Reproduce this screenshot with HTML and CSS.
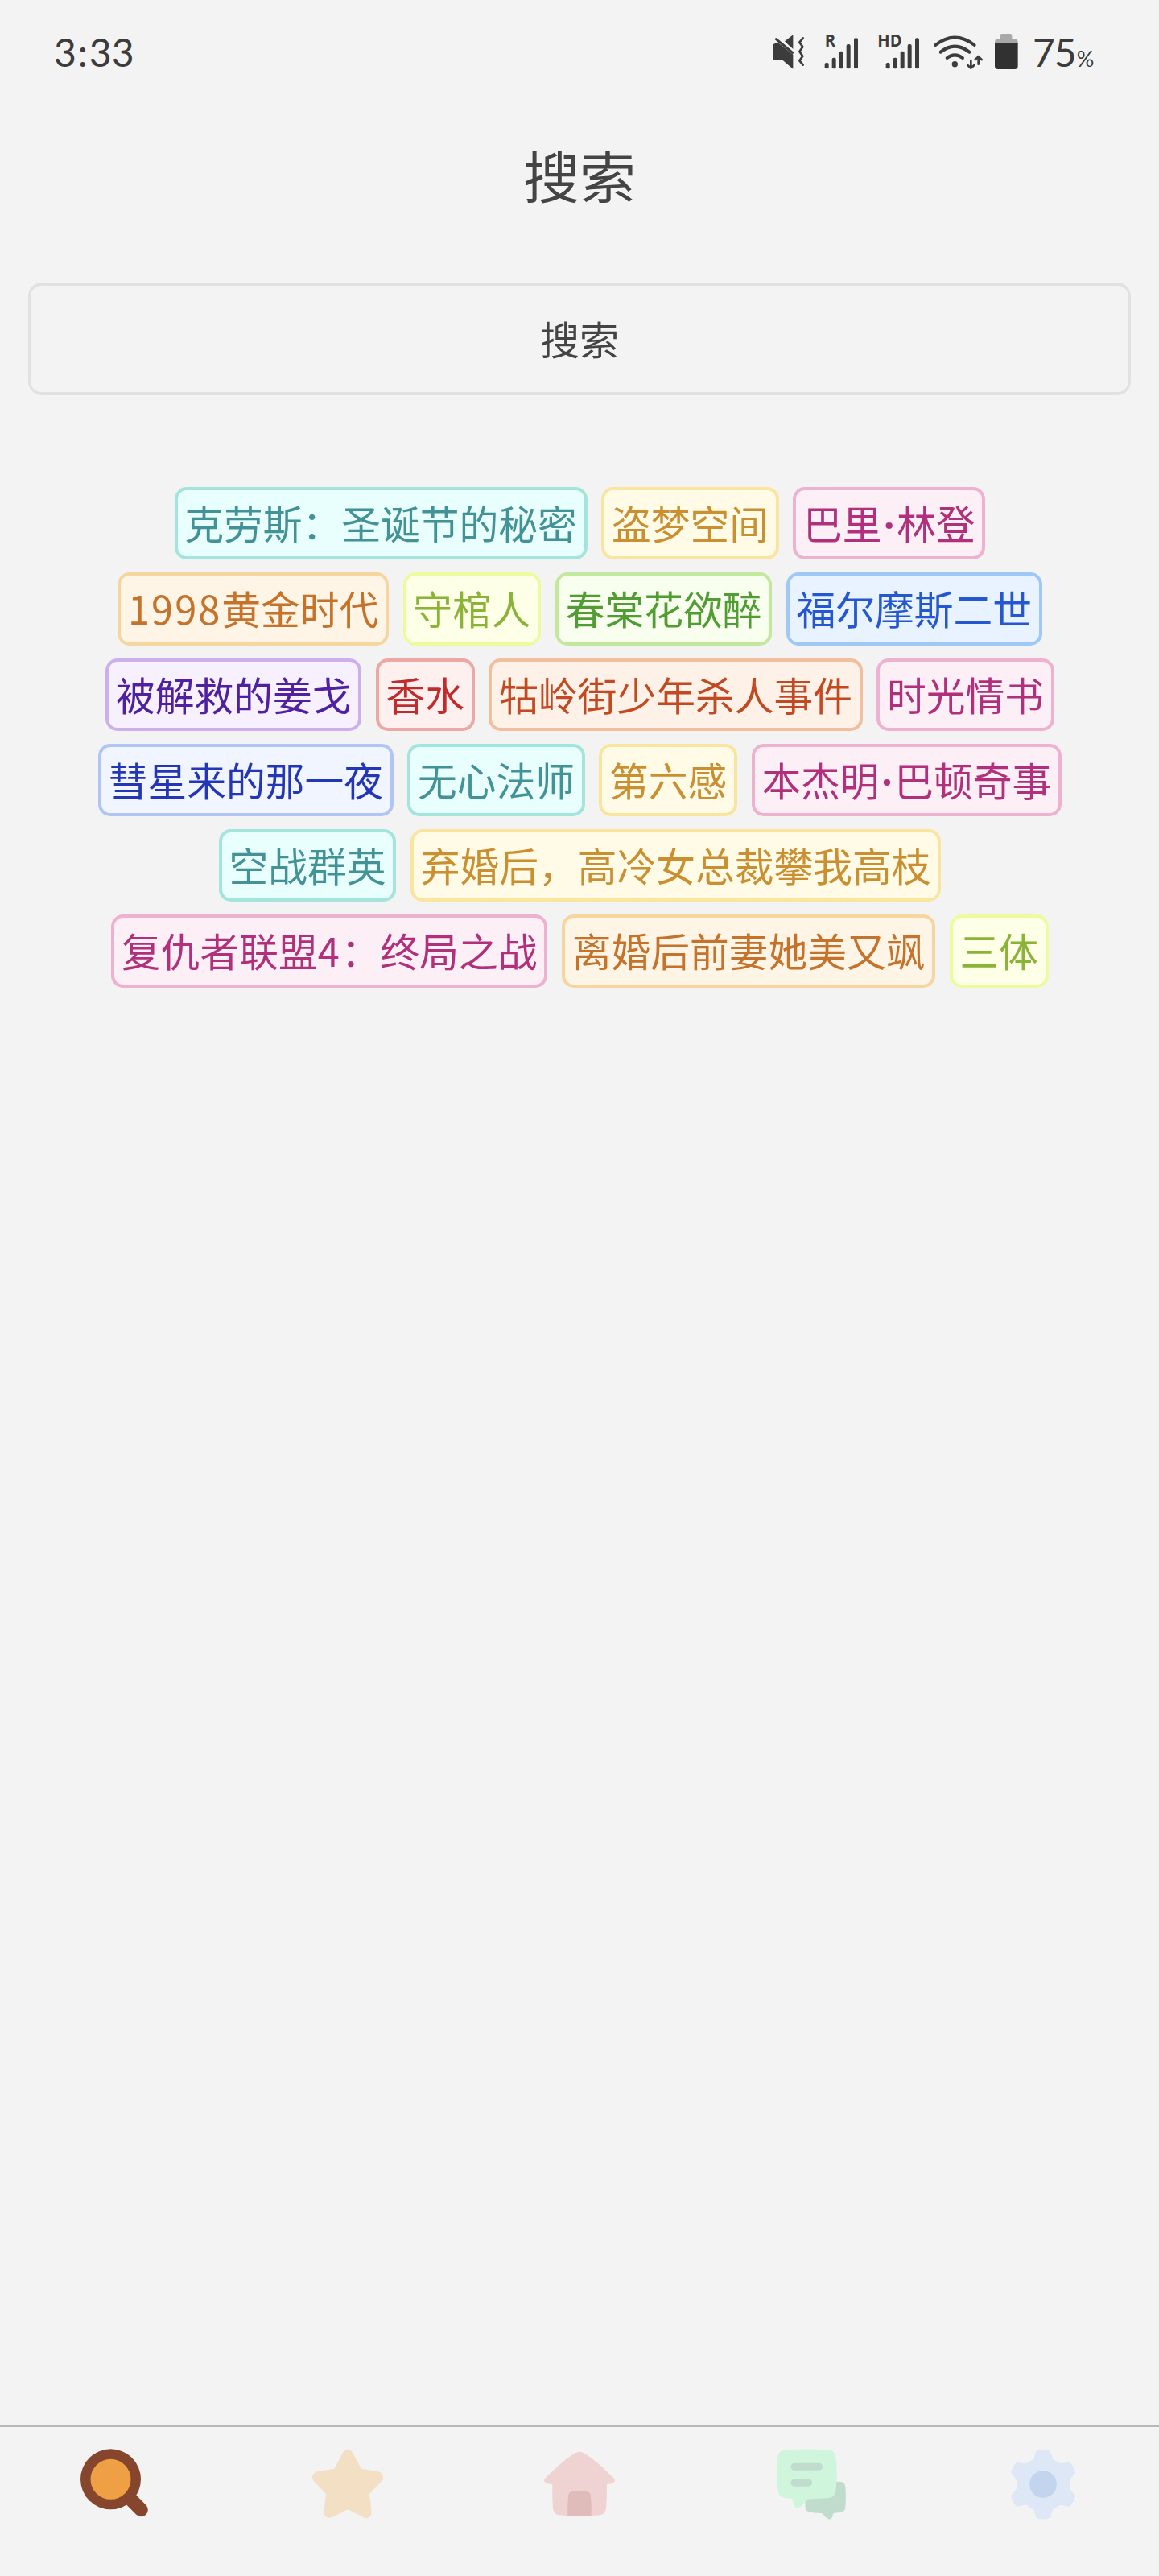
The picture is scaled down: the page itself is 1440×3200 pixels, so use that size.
FILE: index.html
```html
<!DOCTYPE html>
<html lang="zh-CN">
<head>
<meta charset="utf-8">
<title>搜索</title>
<link rel="stylesheet" href="styles.css">
</head>
<body>
<div class="app">
  <header class="status">
    <div class="clock">3<span class="colon">:</span>33</div>
    <div class="indicators">
      <svg width="62" height="48" viewBox="60 60 186 144" fill="#3c3c3c">
        <path d="M62 110Q62 102 70 102H84L136 143V197L98 165H70Q62 165 62 157ZM105 94L136 70V127Z"/>
        <path d="M73 86L134 136" stroke="#3c3c3c" stroke-width="9" stroke-linecap="round"/>
        <path d="M84 82L140 130" stroke="#f3f3f3" stroke-width="6"/>
        <path d="M173 82L160 98L172 115L160 132L172 149L160 166L173 182" fill="none" stroke="#3c3c3c" stroke-width="8" stroke-linecap="round" stroke-linejoin="round"/>
      </svg>
      <svg width="66" height="48" viewBox="246 60 198 144" fill="#3c3c3c">
        <text class="net" x="254" y="115" textLength="40" lengthAdjust="spacingAndGlyphs">R</text>
        <g><rect x="254" y="174" width="15" height="22" rx="6"/><rect x="281" y="155" width="15" height="41" rx="6"/><rect x="308" y="131" width="15" height="65" rx="6"/><rect x="335" y="105" width="15" height="91" rx="6"/><rect x="363" y="82" width="15" height="114" rx="6"/></g>
      </svg>
      <svg width="70" height="48" viewBox="444 60 210 144" fill="#3c3c3c">
        <text class="net" x="451" y="114" textLength="91" lengthAdjust="spacingAndGlyphs">HD</text>
        <g><rect x="482" y="174" width="15" height="22" rx="6"/><rect x="509" y="155" width="15" height="41" rx="6"/><rect x="536" y="131" width="15" height="65" rx="6"/><rect x="563" y="105" width="15" height="91" rx="6"/><rect x="591" y="82" width="15" height="114" rx="6"/></g>
      </svg>
      <svg width="75" height="48" viewBox="654 60 225 144" fill="none" stroke="#3c3c3c" stroke-linecap="round">
        <path d="M667 108Q739 52 812 108M686 134Q739 92 793 134M710 156Q739 134 768 156" stroke-width="12"/>
        <circle cx="739" cy="179" r="11" fill="#3c3c3c" stroke="none"/>
        <path d="M799 166V192M787 183L799 194L811 183M827 179V153M815 162L827 151L839 162" stroke-width="8"/>
      </svg>
      <svg width="50" height="48" viewBox="879 60 150 144">
        <path d="M888 104V96Q888 86 898 86H908V72Q908 66 914 66H946Q952 66 952 72V86H964Q974 86 974 96V104Z" fill="#a9a9a9"/>
        <path d="M888 99H974V186Q974 198 962 198H900Q888 198 888 186Z" fill="#313131"/>
      </svg>
      <div class="battery-text">75<span class="percent">%</span></div>
    </div>
  </header>

  <h1 class="title">搜索</h1>
  <div class="search-box">搜索</div>

  <main class="tags">
    <span class="tag teal">克劳斯：圣诞节的秘密</span>
    <span class="tag gold">盗梦空间</span>
    <span class="tag magenta">巴里<span class="dot">·</span>林登</span>
    <span class="tag orange"><span class="digits">1998</span>黄金时代</span>
    <span class="tag lime">守棺人</span>
    <span class="tag green">春棠花欲醉</span>
    <span class="tag blue">福尔摩斯二世</span>
    <span class="tag purple">被解救的姜戈</span>
    <span class="tag red">香水</span>
    <span class="tag volcano">牯岭街少年杀人事件</span>
    <span class="tag magenta">时光情书</span>
    <span class="tag indigo">彗星来的那一夜</span>
    <span class="tag teal">无心法师</span>
    <span class="tag gold">第六感</span>
    <span class="tag magenta">本杰明<span class="dot">·</span>巴顿奇事</span>
    <span class="tag teal">空战群英</span>
    <span class="tag gold">弃婚后，高冷女总裁攀我高枝</span>
    <span class="tag magenta">复仇者联盟<span class="digits">4</span>：终局之战</span>
    <span class="tag orange">离婚后前妻她美又飒</span>
    <span class="tag lime">三体</span>
  </main>

  <nav class="tabbar">
    <a class="tab">
      <svg class="tab-icon" viewBox="300 127 264 264">
        <path d="M480 308L526 354" stroke="#85462d" stroke-width="51" stroke-linecap="round"/>
        <circle cx="412.500" cy="240.500" r="112.500" fill="#85462d"/>
        <circle cx="412.500" cy="240.500" r="75" fill="#f0a044"/>
      </svg>
    </a>
    <a class="tab">
      <svg class="tab-icon" viewBox="1164 127 264 264">
        <path d="M1277 143Q1284 131 1296 131T1315 143L1346 201L1409 212Q1422 214 1427 226T1423 247L1377 295L1385 362Q1386 375 1376 382T1356 383L1296 353L1236 383Q1226 387 1216 381T1207 362L1215 295L1169 247Q1161 238 1165 227T1183 212L1246 201Z" fill="#f2dfc4"/>
      </svg>
    </a>
    <a class="tab">
      <svg class="tab-icon" viewBox="228 127 264 264">
        <path d="M344 143Q360 134 376 143C412 163 452 201 488 237Q494 243 490 250T480 257L462 260Q462 311 459 350Q457 371 435 374Q360 381 285 374Q264 371 261 350Q258 311 259 260L240 257Q232 255 229 248T232 237C268 201 308 163 344 143Z" fill="#efd3d3"/>
        <path d="M316 377Q315 333 318 303Q320 286 337 284Q360 281 383 284Q400 286 402 303Q405 333 404 377Q360 379 316 377Z" fill="#dfbbba"/>
      </svg>
    </a>
    <a class="tab">
      <svg class="tab-icon" viewBox="1092 127 264 264">
        <path d="M1300 249H1330Q1349 250 1351 269Q1354 306 1351 345Q1349 362 1332 364L1308 366Q1303 370 1303 380Q1299 391 1289 389C1279 385 1272 375 1263 367Q1240 366 1219 363Q1204 361 1202 346Q1200 333 1201 300Z" fill="#bfdccd"/>
        <path d="M1128 131Q1208 126 1287 131Q1312 133 1315 157Q1324 220 1315 285Q1312 307 1289 310Q1255 313 1219 314C1207 315 1198 332 1187 341Q1172 353 1161 342Q1156 338 1156 321Q1155 313 1150 312L1127 310Q1104 307 1100 285Q1091 220 1099 157Q1102 133 1128 131Z" fill="#d0f5dd"/>
        <path d="M1161 194H1253M1161 253.500H1214" stroke="#bfdccd" stroke-width="27" stroke-linecap="round"/>
      </svg>
    </a>
    <a class="tab">
      <svg class="tab-icon" viewBox="216 127 264 264">
        <path d="M323 134Q347 124 373 134L378 145L385 167Q399 172 411 182L446 177Q463 190 468 217L447 243V276L468 301Q464 328 446 342L411 336Q399 346 385 351L374 384Q348 395 323 384L312 351Q299 347 286 336L250 342Q233 329 228 301L249 276V243L228 217Q233 190 250 177L286 182Q298 173 312 167Z" fill="#dde7f5"/>
        <circle cx="348" cy="259" r="50.500" fill="#c3d4ee"/>
      </svg>
    </a>
  </nav>
</div>
</body>
</html>
```
FILE: styles.css
```css
* { box-sizing: border-box; }

body {
  margin: 0;
  background: #f3f3f3;
  color: #444;
  font-family: "Noto Sans CJK SC", sans-serif;
}

.app {
  display: flex;
  flex-direction: column;
  width: 1440px;
  height: 3200px;
}

.status {
  display: flex;
  justify-content: space-between;
  height: 128px;
  padding: 40px 0 0 67px;
  color: #3c3c3c;
  font-family: Lato, sans-serif;
}

.clock,
.battery-text {
  height: 48px;
  font-size: 48px;
  line-height: 49px;
  white-space: nowrap;
}

.colon {
  display: inline-block;
  width: 16px;
  text-align: center;
}

.indicators { display: flex; width: 480px; }
.indicators svg { flex: none; overflow: visible; }

.net { font: 700 62px "Open Sans", sans-serif; }

.battery-text { letter-spacing: -1px; }
.percent { font-size: 27px; margin-left: 1px; }

.title {
  margin: 0;
  height: 180px;
  font-size: 70px;
  font-weight: 400;
  line-height: 177px;
  text-align: center;
}

.search-box {
  height: 140px;
  margin: 43px 35px 0;
  border: 4px solid #e1e1e1;
  border-left-width: 3px;
  border-right-width: 3px;
  border-radius: 17px;
  font-size: 49px;
  line-height: 130px;
  text-align: center;
}

.tags {
  display: flex;
  flex: 1;
  flex-wrap: wrap;
  align-content: flex-start;
  justify-content: center;
  gap: 16px 17.700px;
  padding: 114px 50px 0 51px;
}

.tag {
  height: 90.300px;
  padding: 0 8.700px;
  border: 4px solid;
  border-radius: 15px;
  font-size: 48.750px;
  line-height: 79px;
  white-space: nowrap;
}

.dot {
  margin: 0 2.400px;
  font-family: "Open Sans", sans-serif;
  font-weight: 700;
  line-height: 1;
}

.digits { letter-spacing: 2px; }

.teal { color: #439296; background: #e9fffd; border-color: #a3e4dc; }
.gold { color: #c98f31; background: #fffbe6; border-color: #fae5a0; }
.magenta { color: #b0307c; background: #fceff6; border-color: #eeb1d0; }
.orange { color: #c5722b; background: #fff5e6; border-color: #f6d69f; }
.lime { color: #8bb338; background: #fdffe6; border-color: #edfb9f; }
.green { color: #529c34; background: #f8ffee; border-color: #c2e89d; }
.blue { color: #2557d0; background: #e8f3ff; border-color: #9fc8f6; }
.purple { color: #4f20a0; background: #f6f0ff; border-color: #cbb0ec; }
.red { color: #c02c2c; background: #fdf0ef; border-color: #eca8a4; }
.volcano { color: #c24a22; background: #fdf1e8; border-color: #f1be9e; }
.indigo { color: #2336b5; background: #f0f5ff; border-color: #b0c4f5; }

.tabbar {
  display: flex;
  height: 187px;
  border-top: 2px solid #b8b8b8;
}

.tab {
  display: flex;
  flex: 1;
  justify-content: center;
  padding-top: 27px;
}

.tab-icon { width: 88px; height: 88px; }
```
